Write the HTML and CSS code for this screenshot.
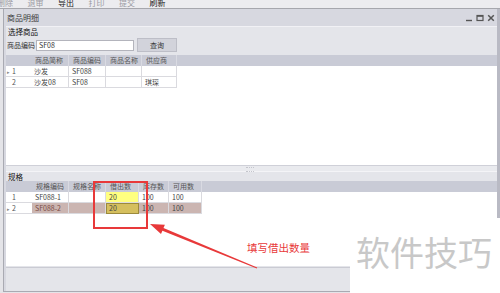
FILE: index.html
```html
<html lang="zh">
<head>
  <meta charset="UTF-8">
  <title>商品明细</title>
  <link rel="stylesheet" href="styles.css">
</head>
<body>
  <div class="toolbar">
    <span class="tool off first">删除</span>
    <span class="tool off">退审</span>
    <span class="tool">导出</span>
    <span class="tool off">打印</span>
    <span class="tool off">提交</span>
    <span class="tool">刷新</span>
  </div>

  <div class="window">
    <div class="titlebar">
      <span class="title">商品明细</span>
      <div class="controls">
        <svg width="8" height="8" viewBox="0 0 8 8"><path d="M1 6.5h6" stroke="#555" stroke-width="1.4"/></svg>
        <svg width="8" height="8" viewBox="0 0 8 8"><rect x="1" y="1.5" width="6" height="5" fill="none" stroke="#555" stroke-width="1.2"/><path d="M1 2h6" stroke="#555" stroke-width="1.6"/></svg>
        <svg width="8" height="8" viewBox="0 0 8 8"><path d="M1.2 1.2l5.6 5.6M6.8 1.2l-5.6 5.6" stroke="#555" stroke-width="1.5"/></svg>
      </div>
    </div>

    <div class="content">
      <div class="group-title">选择商品</div>
      <div class="search">
        <span class="label">商品编码</span>
        <div class="input">SF08</div>
        <div class="btn">查询</div>
      </div>

      <div class="grid grid-top">
        <div class="row head">
          <div class="cell ind"></div>
          <div class="cell w38">商品简称</div>
          <div class="cell w37">商品编码</div>
          <div class="cell w36">商品名称</div>
          <div class="cell w35">供应商</div>
        </div>
        <div class="row">
          <div class="cell ind"><span class="tri">▸</span>1</div>
          <div class="cell w38">沙发</div>
          <div class="cell w37">SF088</div>
          <div class="cell w36"></div>
          <div class="cell w35"></div>
        </div>
        <div class="row">
          <div class="cell ind"><span class="tri"></span>2</div>
          <div class="cell w38">沙发08</div>
          <div class="cell w37">SF08</div>
          <div class="cell w36"></div>
          <div class="cell w35">琪琛</div>
        </div>
      </div>

      <div class="splitter"><span class="grip"></span></div>

      <div class="group-title small">规格</div>
      <div class="grid grid-bottom">
        <div class="row head">
          <div class="cell ind ind2"></div>
          <div class="cell w37">规格编码</div>
          <div class="cell w37">规格名称</div>
          <div class="cell w33">借出数</div>
          <div class="cell w30">库存数</div>
          <div class="cell w33">可用数</div>
        </div>
        <div class="row">
          <div class="cell ind ind2"><span class="tri"></span>1</div>
          <div class="cell w37">SF088-1</div>
          <div class="cell w37"></div>
          <div class="cell w33 edit">20</div>
          <div class="cell w30">100</div>
          <div class="cell w33">100</div>
        </div>
        <div class="row selected">
          <div class="cell ind ind2"><span class="tri">▸</span>2</div>
          <div class="cell w37 code">SF088-2</div>
          <div class="cell w37"></div>
          <div class="cell w33 edit focus">20</div>
          <div class="cell w30">100</div>
          <div class="cell w33">100</div>
        </div>
      </div>
    </div>

    <div class="footer"></div>
  </div>

  <div class="mark-box"></div>
  <svg class="mark-arrow" width="500" height="293" viewBox="0 0 500 293">
    <polygon fill="#e8393a" points="150,224 164.9,224.7 163.5,227.9 257.2,267.5 256.8,268.5 162.4,230.7 161,234"/>
  </svg>
  <div class="mark-text">填写借出数量</div>

  <div class="watermark">软件技巧</div>
</body>
</html>
```

FILE: styles.css
```css
body {
  margin: 0;
  width: 500px;
  height: 293px;
  overflow: hidden;
  position: relative;
  background: #e4e4e8;
  font-family: "Noto Sans CJK SC", "Noto Sans", sans-serif;
  font-size: 7px;
  color: #444;
}

/* top toolbar, mostly hidden behind the window */
.toolbar {
  height: 8px;
  display: flex;
  overflow: hidden;
  background: #ececef;
  border-bottom: 1px solid #a6a7ad;
}

.tool {
  width: 30.5px;
  flex: none;
  font-size: 8px;
  line-height: 9px;
  margin-top: -2px;
  color: #222;
}

.tool.first {
  margin-left: -3px;
}

.tool.off {
  color: #9a9aa2;
}

/* window */
.window {
  margin-left: 3px;
  height: 282px;
  display: flex;
  flex-direction: column;
  background: #d7d8e0;
  border-left: 1px solid #a9aab2;
  border-right: 3px solid #b9bac4;
  border-bottom: 1px solid #a9aab2;
}

.titlebar {
  height: 17px;
  flex: none;
  display: flex;
  align-items: center;
  justify-content: space-between;
  padding-left: 3px;
  padding-right: 2px;
}

.title {
  font-size: 8px;
  color: #3a3a3a;
}

.controls {
  display: flex;
  gap: 3px;
}

.content {
  flex: 1;
  margin-left: 2px;
  display: flex;
  flex-direction: column;
  background: #e4e5ea;
  border-top: 1px solid #f1f1f5;
}

.group-title {
  height: 10px;
  line-height: 10px;
  padding-left: 2px;
  font-size: 7.5px;
  color: #111;
}

.group-title.small {
  height: 9px;
  line-height: 9px;
}

.search {
  height: 16px;
  margin-bottom: 2px;
  display: flex;
  align-items: center;
  padding-left: 1px;
}

.label {
  width: 29px;
  color: #333;
}

.input {
  width: 94px;
  height: 9px;
  line-height: 9px;
  padding-left: 2px;
  background: #fff;
  border: 1px solid #b3b4bc;
  color: #333;
}

.btn {
  margin-left: 3px;
  width: 38px;
  height: 12px;
  line-height: 12px;
  text-align: center;
  background: #d2d3db;
  border: 1px solid #bdbec7;
  color: #333;
}

/* grids */
.grid {
  background: #fff;
}

.grid-top {
  height: 110px;
}

.grid-bottom {
  height: 85px;
}

.row {
  display: flex;
  height: 11px;
}

.cell {
  flex: none;
  box-sizing: border-box;
  height: 11px;
  line-height: 11px;
  padding-left: 3px;
  border-right: 1px solid #dadadf;
  border-bottom: 1px solid #dadadf;
  white-space: nowrap;
  overflow: hidden;
}

.row.head {
  background: #c9cbd6;
  color: #555;
}

.row.head .cell {
  border-right: 1px solid #d9dae2;
  border-bottom: none;
  padding-left: 4px;
}

.row.head .cell.ind {
  border-right: none;
}

.cell.ind {
  width: 25px;
  padding-left: 1px;
  color: #555;
  border-right: none;
}

.cell.ind2 {
  width: 26px;
}

.tri {
  display: inline-block;
  width: 5px;
  font-size: 5px;
  color: #888;
}

.w30 { width: 30px; }
.w33 { width: 33px; }
.w35 { width: 35px; }
.w36 { width: 36px; }
.w37 { width: 37px; }
.w38 { width: 38px; }

.cell.edit {
  background: #ffff80;
}

.row.selected .cell:not(.ind) {
  background: #cbb5b1;
}

.row.selected .cell.code {
  color: #7b4b45;
}

.row.selected .cell.edit.focus {
  background: #d5bf5e;
  border: 1px solid #9c8a3c;
  line-height: 9px;
  padding-left: 2px;
}

.splitter {
  height: 7px;
  position: relative;
  background: #e9eaee;
  border-top: 1px solid #cfd0d8;
  border-bottom: 1px solid #f4f4f7;
  box-sizing: border-box;
}

.grip {
  position: absolute;
  left: 240px;
  top: 1px;
  width: 8px;
  height: 3px;
  border-top: 1px dotted #c4c5cc;
  border-bottom: 1px dotted #c4c5cc;
}

.footer {
  height: 23px;
  flex: none;
  margin-left: 2px;
  background: #e4e5ea;
  border-top: 1px solid #cacbd3;
}

/* annotations over the screenshot */
.mark-box {
  position: absolute;
  left: 93px;
  top: 181px;
  width: 51px;
  height: 44px;
  border: 2px solid #e8393a;
}

.mark-arrow {
  position: absolute;
  left: 0;
  top: 0;
}

.mark-text {
  position: absolute;
  left: 247px;
  top: 241px;
  font-size: 10.5px;
  line-height: 14px;
  color: #e8393a;
}

.watermark {
  position: absolute;
  left: 350px;
  top: 218px;
  width: 150px;
  height: 75px;
  box-sizing: border-box;
  padding-left: 6px;
  padding-top: 16px;
  background: #fff;
  font-size: 34px;
  line-height: 36px;
  color: #c8c8c8;
  white-space: nowrap;
}
```
